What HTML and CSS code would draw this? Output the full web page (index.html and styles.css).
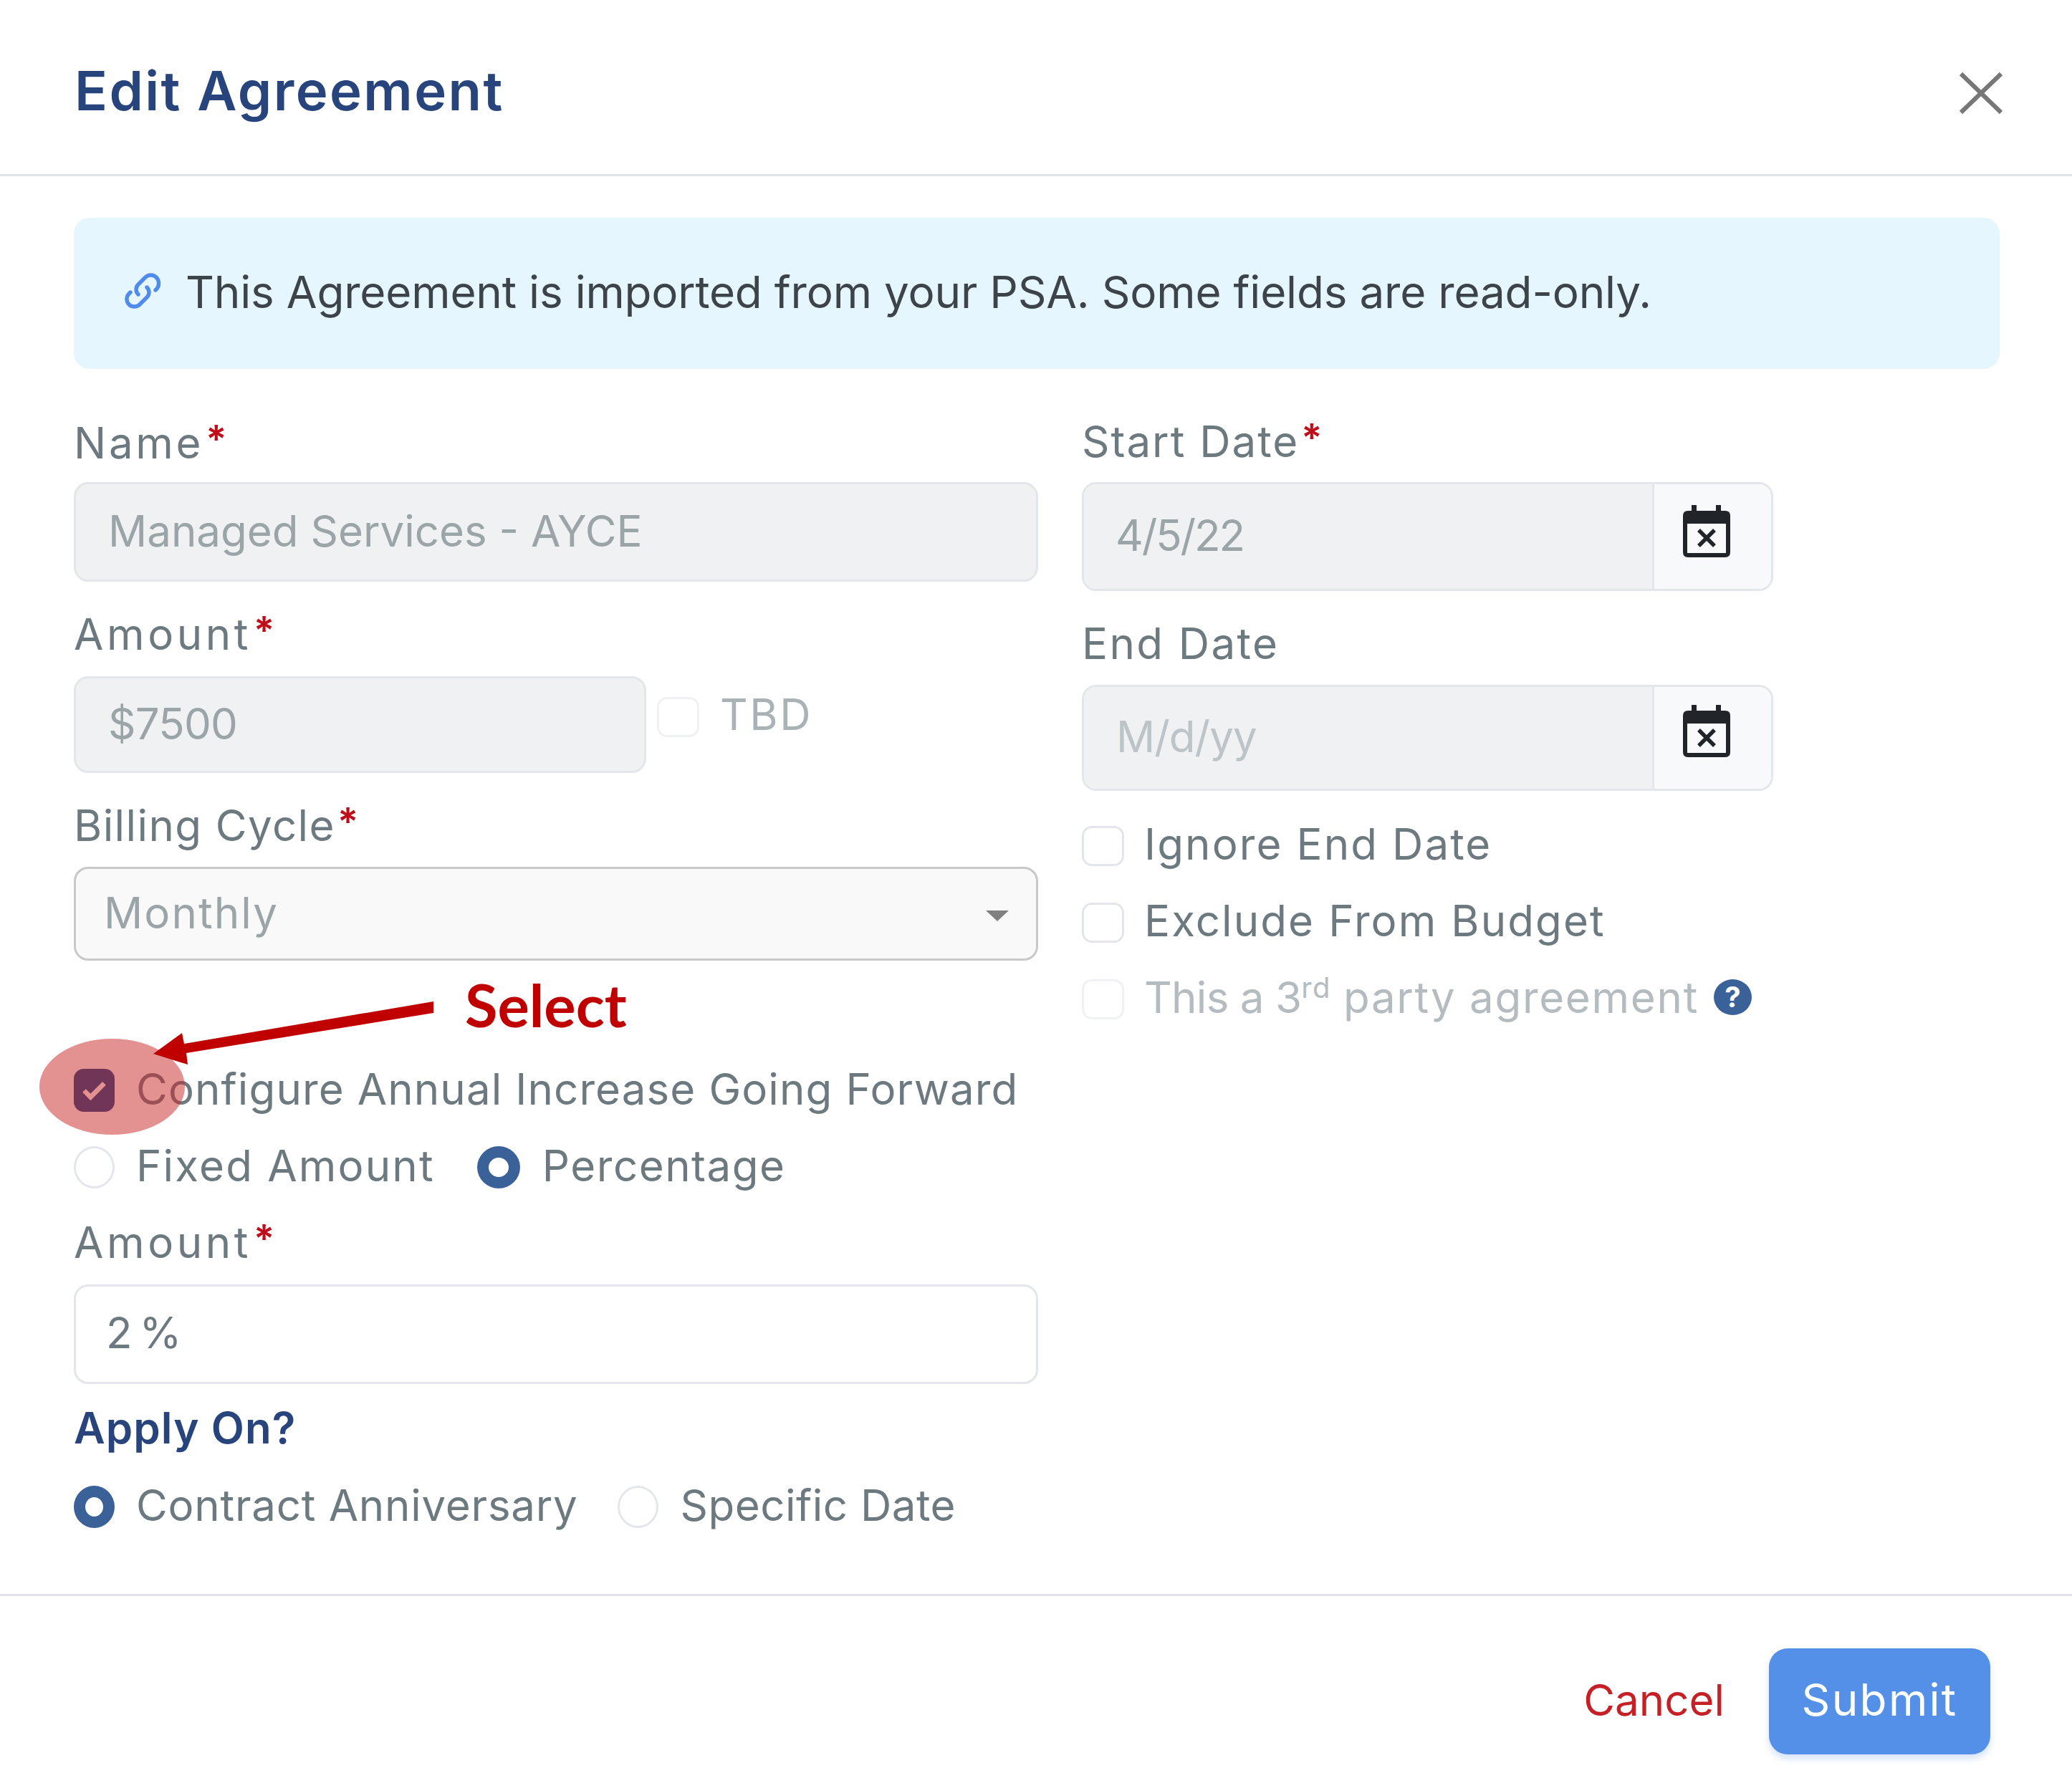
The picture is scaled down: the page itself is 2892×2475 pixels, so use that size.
FILE: index.html
```html
<!DOCTYPE html>
<html lang="en">
<head>
<meta charset="utf-8">
<title>Edit Agreement</title>
<link rel="stylesheet" href="styles.css">
</head>
<body>
<div class="modal">
  <header class="head">
    <h1 class="title">Edit Agreement</h1>
    <svg class="close" viewBox="0 0 62 60"><path d="M3 3L59 57M59 3L3 57"/></svg>
  </header>
  <main class="body">
    <div class="alert">
      <svg class="link" viewBox="0 0 52 52"><path d="M44 25L46 23C50 18 49 11 45 7C41 3 34 3 30 7L20 17C16 21 16 27 20 31"/><path d="M9 28L7 30C3 34 3 41 7 45C11 49 18 49 22 45L32 35C36 31 36 25 32 21"/></svg>
      <span class="alert-text">This Agreement is imported from your PSA. Some fields are read-only.</span>
    </div>
    <div class="form">
      <div class="col col-left">
        <div class="label lb-first">Name<span class="req">*</span></div>
        <div class="control disabled h139"><span>Managed Services - AYCE</span></div>
        <div class="label lb-next">Amount<span class="req">*</span></div>
        <div class="amount-row">
          <div class="control disabled amount-input"><span class="val-amt">$7500</span></div>
          <div class="tbd"><span class="box box-tbd"></span><span class="tbd-text">TBD</span></div>
        </div>
        <div class="label lb-billing">Billing Cycle<span class="req">*</span></div>
        <div class="control select"><span class="val-month">Monthly</span><span class="caret"></span></div>
        <div class="row row-config"><span class="box box-on"><svg viewBox="0 0 32 26"><path d="M3 13L11 21L28 4"/></svg></span><span class="opt t-config">Configure Annual Increase Going Forward</span></div>
        <div class="row row-radio">
          <span class="radio"></span><span class="opt t-fixed">Fixed Amount</span>
          <span class="radio on r-pct"></span><span class="opt t-pct">Percentage</span>
        </div>
        <div class="label lb-amt2">Amount<span class="req">*</span></div>
        <div class="control h139"><span class="val-pct">2 %</span></div>
        <div class="label section">Apply On?</div>
        <div class="row row-apply">
          <span class="radio on"></span><span class="opt t-contract">Contract Anniversary</span>
          <span class="radio r-spec"></span><span class="opt t-spec">Specific Date</span>
        </div>
      </div>
      <div class="col col-right">
        <div class="label lb-start">Start Date<span class="req">*</span></div>
        <div class="group h152">
          <div class="group-field"><span class="val-date">4/5/22</span></div>
          <div class="group-btn"><svg class="cal" viewBox="0 0 66 73"><path fill-rule="evenodd" d="M12 0h7v8h27V0h7v8h6q7 0 7 7v51q0 7-7 7H7q-7 0-7-7V15q0-7 7-7h5zM6 26v41h54V26z"/><path class="cal-x" d="M22 35L44 57M44 35L22 57"/></svg></div>
        </div>
        <div class="label lb-end">End Date</div>
        <div class="group h148">
          <div class="group-field"><span class="val-ph">M/d/yy</span></div>
          <div class="group-btn"><svg class="cal" viewBox="0 0 66 73"><path fill-rule="evenodd" d="M12 0h7v8h27V0h7v8h6q7 0 7 7v51q0 7-7 7H7q-7 0-7-7V15q0-7 7-7h5zM6 26v41h54V26z"/><path class="cal-x" d="M22 35L44 57M44 35L22 57"/></svg></div>
        </div>
        <div class="row rr r1"><span class="box"></span><span class="opt t-ignore">Ignore End Date</span></div>
        <div class="row rr r2"><span class="box"></span><span class="opt t-excl">Exclude From Budget</span></div>
        <div class="row rr r3"><span class="box box-faint"></span><span class="opt t-third"><span class="third-a">This a 3</span><sup>rd</sup> <span class="third-b">party agreement</span></span><span class="help">?</span></div>
      </div>
    </div>
  </main>
  <footer class="foot">
    <span class="cancel">Cancel</span>
    <span class="submit">Submit</span>
  </footer>
  <svg class="annot" viewBox="0 0 2892 2475">
    <ellipse class="spot" cx="156.5" cy="1517" rx="101.5" ry="67"/>
    <polygon class="arrow" points="605,1398 257,1457 254,1442 214,1471 262,1486 260,1470 605,1414"/>
  </svg>
  <span class="select-note">Select</span>
</div>
</body>
</html>
```
FILE: styles.css
```css
* { box-sizing: border-box; }
html, body { margin: 0; padding: 0; background: #fff; }
body { font-family: Inter, "Liberation Sans", sans-serif; color: #6c7a80; }
.modal { position: relative; width: 2892px; height: 2475px; display: flex; flex-direction: column; overflow: hidden; background: #fff; }

.head { height: 246px; flex: none; border-bottom: 3px solid #dfe2e6; display: flex; align-items: flex-start; justify-content: space-between; padding: 0 96px 0 104px; }
.title { margin: 82px 0 0; font-size: 76px; line-height: 88px; font-weight: 600; color: #27447c; letter-spacing: 2.4px; }
.close { width: 62px; height: 60px; margin-top: 100px; }
.close path { stroke: #777; stroke-width: 6; fill: none; }

.body { flex: 1; padding: 58px 101px 0 103px; }
.alert { height: 211px; background: #e5f6fe; border-radius: 22px; display: flex; align-items: center; padding-left: 70px; }
.link { width: 52px; height: 52px; flex: none; margin-top: -8px; }
.link path { fill: none; stroke: #4f8bec; stroke-width: 5.4; stroke-linecap: round; }
.alert-text { margin: -4px 0 0 34px; font-size: 62px; line-height: 70px; color: #3c444a; letter-spacing: -0.2px; }

.form { display: grid; grid-template-columns: 1346px 965px; column-gap: 61px; margin-top: 68px; }
.col { display: flex; flex-direction: column; align-items: stretch; }

.label { height: 70px; font-size: 60px; line-height: 70px; }
.req { margin-left: 3px; color: #c00d1a; font-size: 54px; font-weight: 600; letter-spacing: 0; position: relative; top: -8px; }
.lb-first { margin-bottom: 20px; letter-spacing: 3.7px; }
.lb-next { margin-top: 38px; margin-bottom: 24px; letter-spacing: 4.6px; }
.lb-billing { margin-top: 38px; margin-bottom: 23px; letter-spacing: 1.4px; }
.lb-amt2 { margin-top: 40px; margin-bottom: 24px; letter-spacing: 4.6px; }
.section { margin-top: 26px; font-weight: 600; color: #27447c; letter-spacing: 1.1px; }
.lb-start { margin-top: -2px; margin-bottom: 22px; letter-spacing: 2px; }
.lb-end { margin-top: 38px; margin-bottom: 23px; letter-spacing: 2.4px; }

.control { display: flex; align-items: center; border: 3px solid #e3e6ea; border-radius: 20px; padding: 0 0 4px 45px; font-size: 60px; color: #6c7a80; }
.disabled { background: #f0f1f3; color: #9ba5a7; }
.h139 { height: 139px; }
.amount-row { display: flex; align-items: flex-start; }
.amount-input { width: 799px; height: 135px; }
.val-amt { letter-spacing: -0.8px; }
.tbd { display: flex; align-items: flex-start; margin: 29px 0 0 15px; }
.tbd-text { margin: -4px 0 0 29px; font-size: 60px; line-height: 56px; color: #a9b2b5; letter-spacing: 2.6px; }
.select { height: 131px; background: #f9f9f9; border-color: #c8c8c8; color: #9ba5a7; justify-content: space-between; padding: 0 38px 4px 39px; }
.val-month { letter-spacing: 2.1px; }
.val-pct { margin-left: -3px; letter-spacing: -3.5px; position: relative; top: -1px; }
.caret { width: 0; height: 0; border-left: 16px solid transparent; border-right: 16px solid transparent; border-top: 15px solid #808080; margin-top: 9px; }

.row { display: flex; align-items: center; }
.row-config { margin-top: 151px; height: 60px; }
.row-radio { margin-top: 47px; height: 60px; }
.row-apply { margin-top: 46px; height: 59px; }
.opt { margin-top: -4px; font-size: 60px; line-height: 60px; white-space: nowrap; }
.row-apply .opt { margin-top: -6px; }

.box { flex: none; display: block; width: 59px; height: 56px; border: 3px solid #e3e6ea; border-radius: 14px; background: #fff; }
.box-tbd, .box-faint { border-color: #eff1f3; }
.box-on { width: 57px; height: 60px; background: #18458b; border: 0; display: flex; align-items: center; justify-content: center; }
.box-on svg { width: 36px; height: 29px; }
.box-on path { fill: none; stroke: #fff; stroke-width: 6; }

.radio { flex: none; display: block; width: 57px; height: 59px; border: 3px solid #e3e6ea; border-radius: 50%; background: #fff; }
.radio.on { border: 16px solid #3b6199; }
.t-config { margin-left: 30px; letter-spacing: 1.1px; }
.t-fixed { margin-left: 30px; letter-spacing: 2.2px; }
.t-contract { margin-left: 30px; letter-spacing: 0.75px; }
.r-pct { margin-left: 59px; width: 60px; }
.t-pct { margin-left: 31px; letter-spacing: 1.5px; }
.r-spec { margin-left: 55px; }
.t-spec { margin-left: 31px; letter-spacing: 0.5px; }

.group { display: flex; border: 3px solid #e3e6ea; border-radius: 20px; overflow: hidden; }
.h152 { height: 152px; }
.h148 { height: 148px; }
.group-field { flex: 1; background: #f0f1f3; display: flex; align-items: center; padding: 0 0 4px 45px; font-size: 60px; color: #9ba5a7; }
.val-date { margin-left: -1px; letter-spacing: -2.1px; }
.val-ph { color: #bcc4c8; letter-spacing: -1px; }
.group-btn { width: 166px; background: #f8f9fb; border-left: 3px solid #e3e6ea; display: flex; align-items: center; justify-content: center; padding-right: 18px; }
.cal { width: 66px; height: 73px; margin-top: -16px; }
.h148 .cal { margin-top: -20px; }
.cal path { fill: #212529; }
.cal .cal-x { fill: none; stroke: #212529; stroke-width: 5.5; }

.rr { height: 56px; }
.rr .opt { margin: -6px 0 0 28px; }
.r1 { margin-top: 49px; }
.r2 { margin-top: 51px; }
.r3 { margin-top: 51px; }
.t-ignore { letter-spacing: 2.1px; }
.t-excl { letter-spacing: 2.1px; }
.t-third { color: #b4bcbf; }
.third-a { letter-spacing: -0.7px; }
.third-b { letter-spacing: 1.7px; }
.t-third sup { font-size: 40px; line-height: 0; letter-spacing: 1.4px; }
.help { margin: -6px 0 0 21px; flex: none; width: 53px; height: 50px; border-radius: 50%; background: #3b6199; color: #fff; font-size: 40px; font-weight: 700; line-height: 50px; text-align: center; }

.foot { height: 250px; flex: none; border-top: 3px solid #dfe2e6; display: flex; align-items: flex-start; justify-content: flex-end; padding: 73px 114px 0 0; }
.cancel { margin-top: 36px; margin-right: 62px; font-size: 60px; line-height: 72px; color: #c42026; }
.submit { width: 309px; height: 148px; background: #5490e8; border-radius: 26px; color: #fff; font-size: 62px; letter-spacing: 2.3px; line-height: 144px; text-align: center; box-shadow: 0 6px 10px rgba(84,144,232,.25); }

.annot { position: absolute; left: 0; top: 0; width: 2892px; height: 2475px; pointer-events: none; }
.spot { fill: rgba(200,40,40,.51); }
.arrow { fill: #c00000; }
.select-note { position: absolute; left: 649px; top: 1352px; font-family: Lato, "Liberation Sans", sans-serif; font-weight: 700; font-size: 83px; line-height: 100px; color: #c00000; }
```
